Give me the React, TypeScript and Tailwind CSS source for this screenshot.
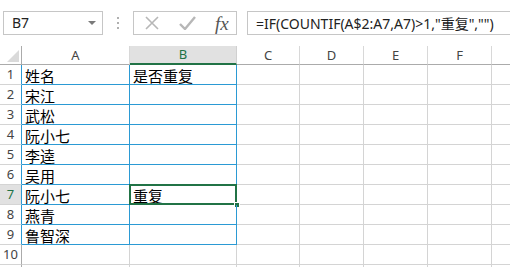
import React from "react";

const names = ["姓名", "宋江", "武松", "阮小七", "李逵", "吴用", "阮小七", "燕青", "鲁智深", ""];
const bcol = ["是否重复", "", "", "", "", "", "重复", "", "", ""];

const CJK = { fontFamily: '"SimSun","Noto Sans CJK SC","Noto Sans",sans-serif' };

function Toolbar() {
  return (
    <div className="h-[46px] shrink-0 flex items-start pt-[11px]">
      <div className="ml-[3px] w-[100px] h-[24px] border border-[#c6c6c6] flex items-center pl-[8px] pr-[6px] text-[14px] text-[#222]" style={{ fontFamily: '"Noto Sans",sans-serif' }}>
        <span className="flex-1 leading-none">B7</span>
        <svg width="8" height="5" viewBox="0 0 8 5"><path d="M0 0 L8 0 L4 4 Z" fill="#7a7a7a" /></svg>
      </div>
      <div className="ml-[14px] mt-[6px] flex flex-col gap-[3px]">
        <div className="w-[2px] h-[2px] bg-[#b0b0b0]" />
        <div className="w-[2px] h-[2px] bg-[#b0b0b0]" />
        <div className="w-[2px] h-[2px] bg-[#b0b0b0]" />
      </div>
      <div className="ml-[14px] w-[104px] h-[24px] border border-[#c6c6c6] flex items-center">
        <svg className="ml-[11px]" width="14" height="14" viewBox="0 0 14 14">
          <path d="M1 1 L13 13 M13 1 L1 13" stroke="#b7b7b7" strokeWidth="1.6" />
        </svg>
        <svg className="ml-[20px]" width="17" height="14" viewBox="0 0 17 14">
          <path d="M1 8 L6 13 L16 1" stroke="#b7b7b7" strokeWidth="2.4" fill="none" />
        </svg>
        <span className="ml-[19px] text-[19px] italic text-[#555] leading-none" style={{ fontFamily: '"Liberation Serif",serif' }}>
          fx
        </span>
      </div>
      <div className="ml-[10px] flex-1 h-[24px] border-l border-t border-b border-[#c6c6c6] flex items-center pl-[8px] text-[14px] text-[#222] whitespace-nowrap" style={{ fontFamily: '"Noto Sans","Noto Sans CJK SC",sans-serif' }}>
        =IF(COUNTIF(A$2:A7,A7)&gt;1,"重复","")
      </div>
    </div>
  );
}

const colW = ["w-[63px]", "w-[64px]", "w-[64px]", "w-[64px]"];
const colL = ["C", "D", "E", "F"];

function Header() {
  return (
    <div className="flex h-[19px] shrink-0 text-[13px] text-[#444]" style={{ fontFamily: '"Noto Sans",sans-serif' }}>
      <div className="w-[22px] shrink-0 border-r border-b border-[#ababab] relative">
        <svg className="absolute right-[2px] bottom-[2px]" width="12" height="12" viewBox="0 0 12 12">
          <path d="M12 0 L12 12 L0 12 Z" fill="#dadada" />
        </svg>
      </div>
      <div className="w-[108px] shrink-0 border-r border-b border-r-[#d8d8d8] border-b-[#ababab] flex items-center justify-center leading-none">A</div>
      <div className="w-[107px] shrink-0 bg-[#e1e1e1] border-r border-r-[#d0d0d0] border-b-2 border-b-[#217346] flex items-center justify-center leading-none text-[#217346]">B</div>
      {colL.map((c, i) => (
        <div key={c} className={`${colW[i]} shrink-0 border-r border-b border-r-[#d8d8d8] border-b-[#ababab] flex items-center justify-center leading-none`}>
          {c}
        </div>
      ))}
      <div className="flex-1 border-b border-[#ababab]" />
    </div>
  );
}

function Row({ i }: { i: number }) {
  const n = i + 1;
  const bordered = n <= 9;
  const sel = n === 7;
  return (
    <div className="flex h-[20px] shrink-0">
      <div
        className={
          sel
            ? "w-[22px] shrink-0 bg-[#e1e1e1] border-r border-b border-r-[#2b9ad4] border-b-[#d4d4d4] flex items-center justify-center text-[13px] text-[#217346] leading-none"
            : bordered
            ? "w-[22px] shrink-0 border-r border-b border-r-[#2b9ad4] border-b-[#d4d4d4] flex items-center justify-center text-[13px] text-[#444] leading-none"
            : "w-[22px] shrink-0 border-r border-b border-r-[#ababab] border-b-[#d4d4d4] flex items-center justify-center text-[13px] text-[#444] leading-none"
        }
        style={{ fontFamily: '"Noto Sans",sans-serif' }}
      >
        {n}
      </div>
      <div
        className={
          bordered
            ? "w-[108px] shrink-0 border-r border-b border-[#2b9ad4] flex items-center pl-[3px] pt-[2px] text-[15px] text-black leading-none"
            : "w-[108px] shrink-0 border-r border-b border-[#d4d4d4] flex items-center pl-[3px] pt-[2px] text-[15px] text-black leading-none"
        }
        style={CJK}
      >
        {names[i]}
      </div>
      <div
        className={
          bordered
            ? "w-[107px] shrink-0 border-r border-b border-[#2b9ad4] flex items-center pl-[3px] pt-[2px] text-[15px] text-black leading-none relative"
            : "w-[107px] shrink-0 border-r border-b border-[#d4d4d4] flex items-center pl-[3px] pt-[2px] text-[15px] text-black leading-none relative"
        }
        style={CJK}
      >
        {bcol[i]}
        {sel && (
          <>
            <div className="absolute left-[-1px] top-[-1px] right-[-1px] bottom-[-1px] border-2 border-[#217346] pointer-events-none" />
            <div className="absolute right-[-4px] bottom-[-4px] w-[6px] h-[6px] bg-[#217346] border border-white" />
          </>
        )}
      </div>
      {colW.map((w, k) => (
        <div key={k} className={`${w} shrink-0 border-r border-b border-[#d4d4d4]`} />
      ))}
      <div className="flex-1 border-b border-[#d4d4d4]" />
    </div>
  );
}

export default function App() {
  return (
    <div className="w-[510px] h-[267px] bg-white overflow-hidden flex flex-col">
      <Toolbar />
      <Header />
      {names.map((_, i) => (
        <Row key={i} i={i} />
      ))}
      <div className="flex h-[2px] shrink-0">
        <div className="w-[22px] shrink-0 border-r border-[#ababab]" />
        <div className="w-[108px] shrink-0 border-r border-[#d4d4d4]" />
        <div className="w-[107px] shrink-0 border-r border-[#d4d4d4]" />
        {colW.map((w, k) => (
          <div key={k} className={`${w} shrink-0 border-r border-[#d4d4d4]`} />
        ))}
      </div>
    </div>
  );
}
